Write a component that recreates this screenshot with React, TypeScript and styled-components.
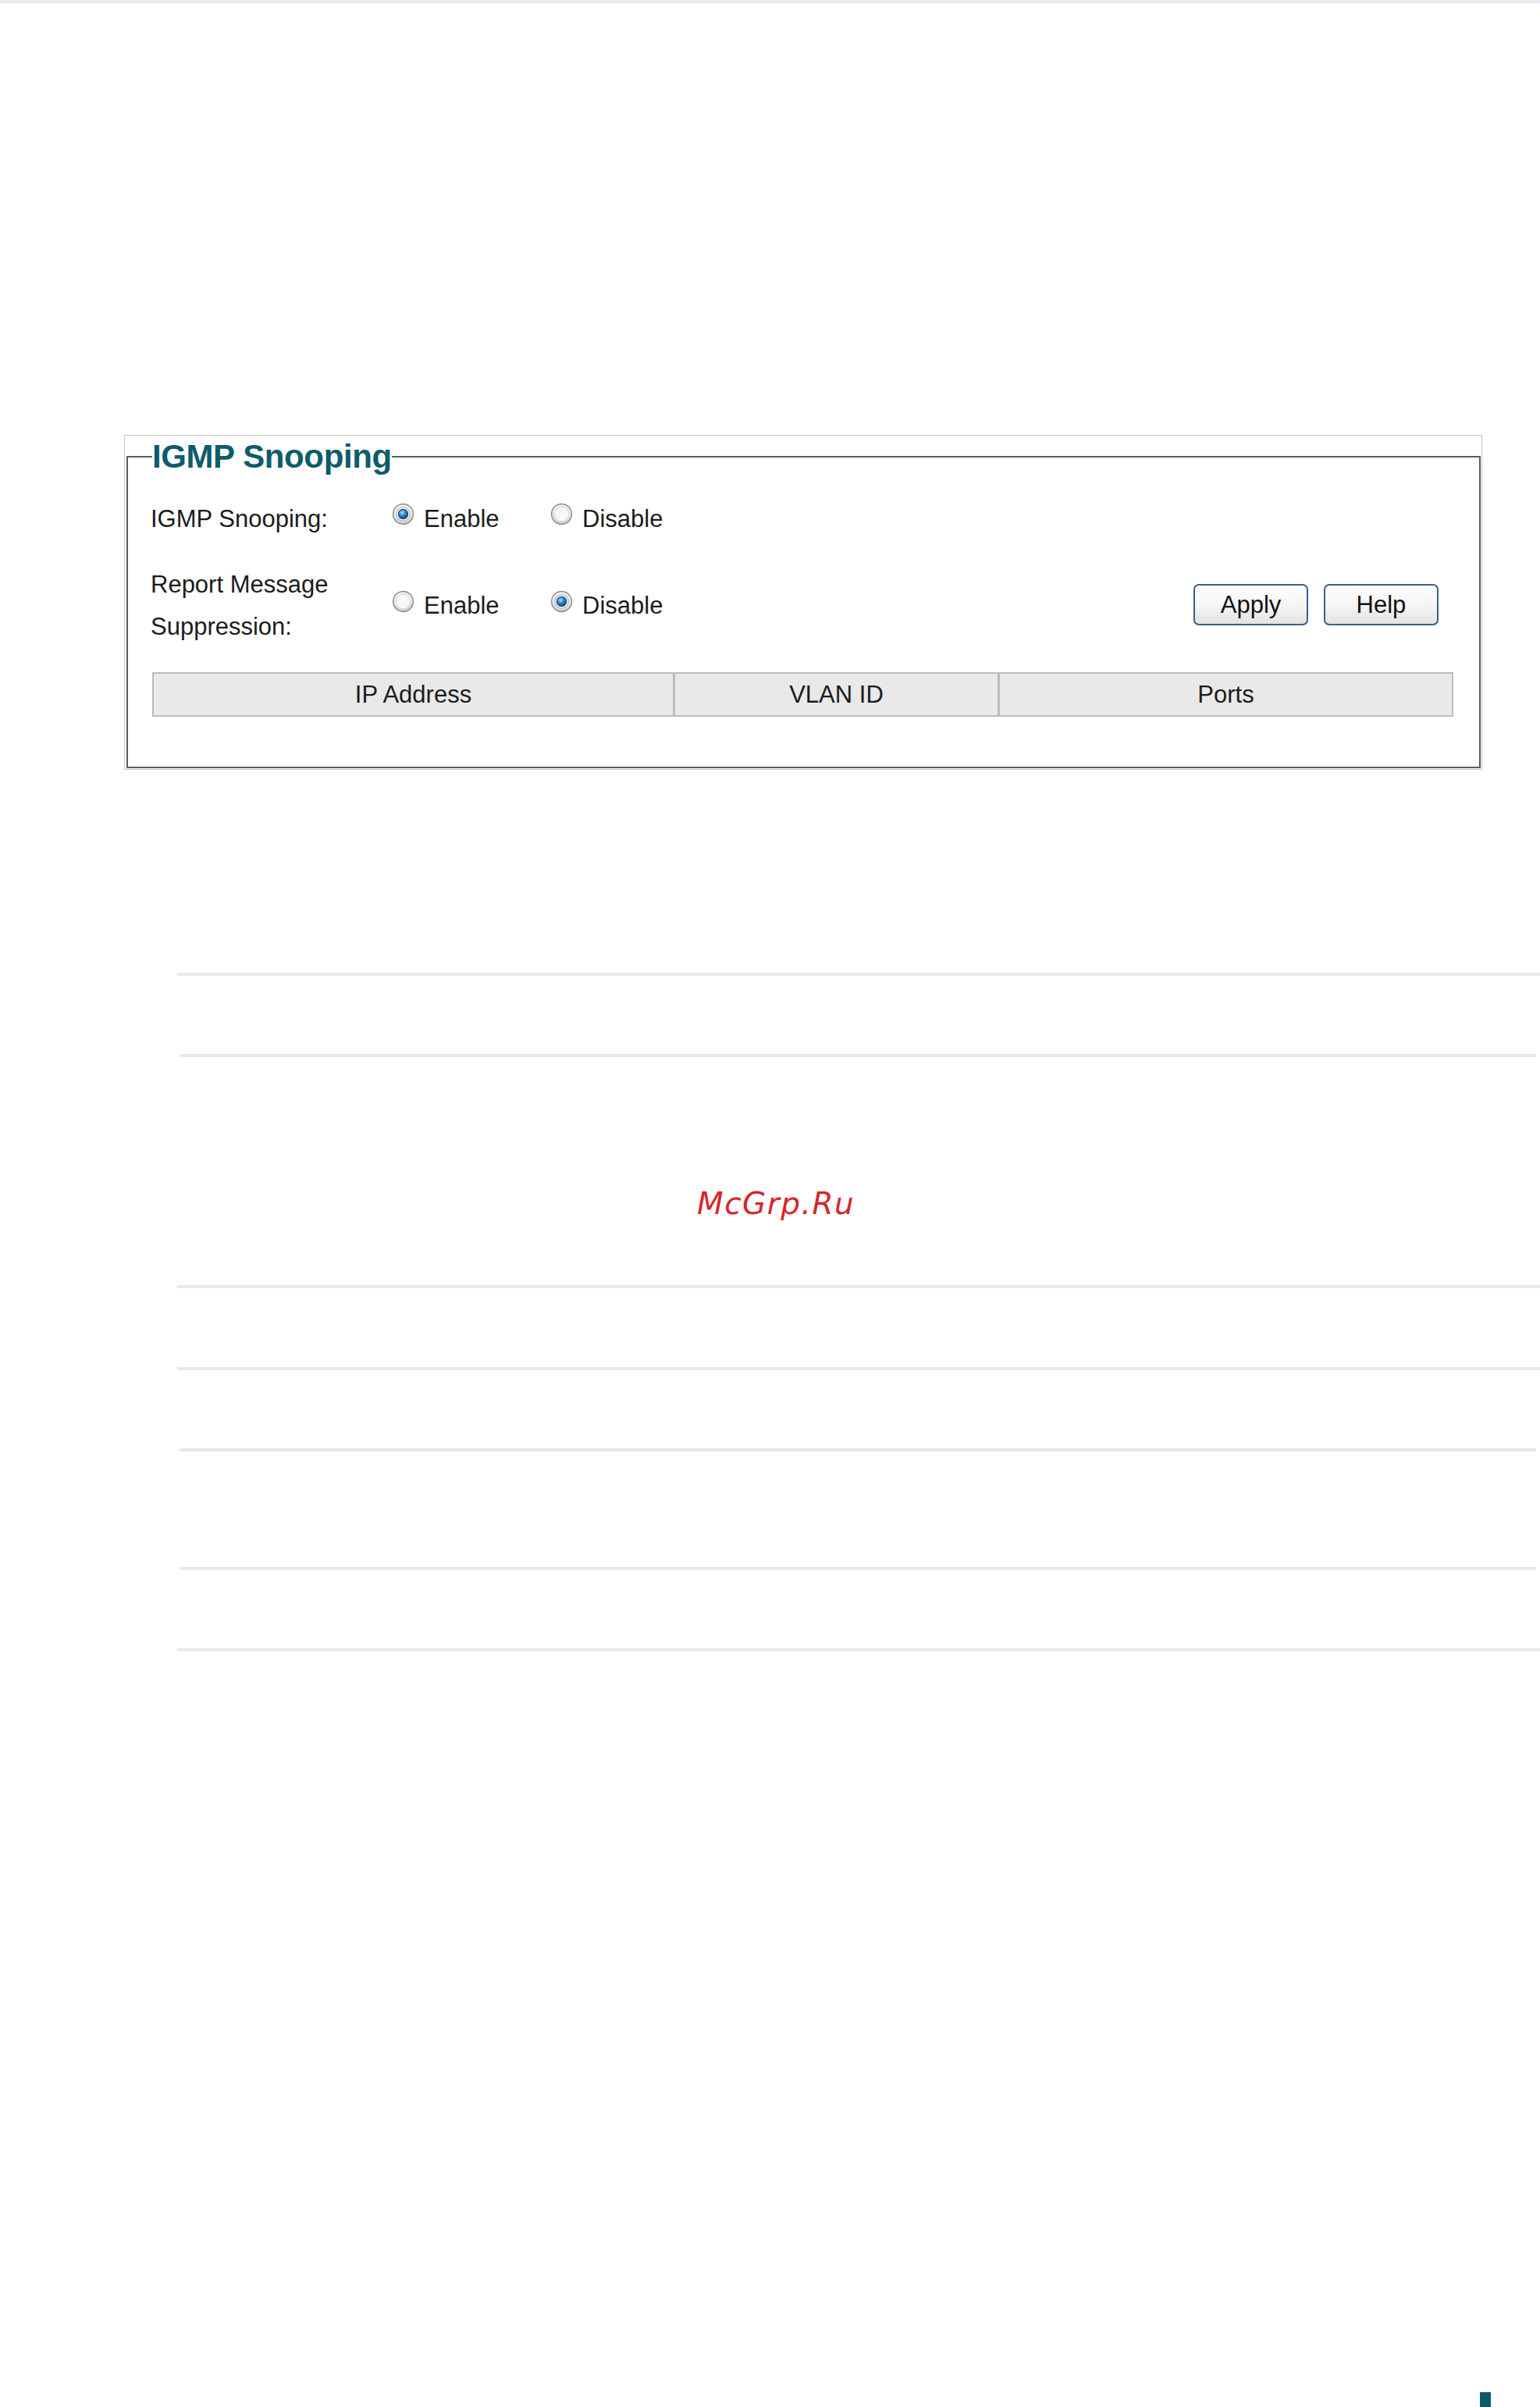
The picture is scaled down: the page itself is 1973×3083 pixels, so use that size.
import React from "react";
import styled, { createGlobalStyle } from "styled-components";

const GlobalStyle = createGlobalStyle`
  html, body {
    margin: 0;
    padding: 0;
    background: #ffffff;
  }
  body {
    font-family: "Liberation Sans", Arial, sans-serif;
    color: #1c1c1c;
  }
`;

const Page = styled.div`
  height: 3083px;
  overflow: hidden;
  display: flex;
  flex-direction: column;
`;

const TopRule = styled.div`
  height: 4px;
  background: #e4edf4;
  flex-shrink: 0;
`;

const Panel = styled.div`
  box-sizing: border-box;
  width: 1740px;
  margin: 553px 0 0 159px;
  padding: 2px 1px 1px 2px;
  border: 1px solid #c6c6c6;
  flex-shrink: 0;
`;

const Frame = styled.fieldset`
  margin: 0;
  min-width: 0;
  padding: 0 33px 64px 29px;
  border: 2px solid #535e65;
`;

const Legend = styled.legend`
  margin-left: 2px;
  padding: 0;
  font-size: 42px;
  line-height: 50px;
  font-weight: bold;
  letter-spacing: -0.4px;
  color: #0e5c6b;
`;

const Body = styled.div`
  padding-top: 34px;
`;

const Row = styled.div<{ $gap?: number }>`
  display: flex;
  align-items: center;
  margin-top: ${(p) => p.$gap ?? 0}px;
  min-height: 40px;
`;

const Label = styled.div<{ $single?: boolean }>`
  width: 309px;
  flex-shrink: 0;
  font-size: 31px;
  line-height: ${(p) => (p.$single ? 40 : 54)}px;
`;

const Option = styled.label`
  display: flex;
  align-items: center;
  width: 203px;
  font-size: 31px;
  line-height: 40px;
  cursor: pointer;
`;

const RadioMark = styled.svg`
  width: 29px;
  height: 29px;
  margin: 0 12px 12px 0;
  flex-shrink: 0;
`;

const Buttons = styled.div`
  display: flex;
  gap: 20px;
  margin: 0 19px 3px auto;
`;

const Button = styled.button`
  box-sizing: border-box;
  width: 147px;
  height: 53px;
  padding: 0;
  border: 2px solid #3b5e88;
  border-radius: 7px;
  background: linear-gradient(#ffffff 0%, #f4f4f4 55%, #e3e3e3 100%);
  font-family: "Liberation Sans", Arial, sans-serif;
  font-size: 31px;
  color: #111111;
  cursor: pointer;
`;

const HeaderGrid = styled.div`
  display: grid;
  grid-template-columns: 668px 416px 1fr;
  margin: 31px 0 0 2px;
  box-sizing: border-box;
  height: 57px;
  border: 2px solid #bcbcbc;
  background: #e9e9e9;
`;

const HeaderCell = styled.div<{ $last?: boolean }>`
  display: flex;
  align-items: center;
  justify-content: center;
  font-size: 31px;
  line-height: 40px;
  border-right: ${(p) => (p.$last ? "none" : "3px solid #bcbcbc")};
`;

const Rules = styled.div`
  margin-top: 260px;
  padding-left: 227px;
  flex-shrink: 0;
`;

const Rule = styled.div<{ $top: number; $narrow?: boolean }>`
  height: 4px;
  background: #e2eaf0;
  margin-top: ${(p) => p.$top}px;
  margin-left: ${(p) => (p.$narrow ? 3 : 0)}px;
  margin-right: ${(p) => (p.$narrow ? 5 : 0)}px;
`;

const Watermark = styled.div`
  margin: 165px 0 0 666px;
  height: 46px;
  font-family: "DejaVu Sans", sans-serif;
  font-style: oblique;
  font-size: 39px;
  line-height: 46px;
  letter-spacing: 1.5px;
  color: #d7262b;
  white-space: nowrap;
`;

const Footer = styled.div`
  margin-top: auto;
  display: flex;
  justify-content: flex-end;
  padding-right: 63px;
`;

const PageMark = styled.div`
  width: 14px;
  height: 19px;
  background: #0b5a68;
`;

const Radio = ({ checked }: { checked: boolean }) => (
  <RadioMark viewBox="0 0 28 28">
    <defs>
      <radialGradient id="ringFill" cx="50%" cy="40%" r="60%">
        <stop offset="0%" stopColor="#ffffff" />
        <stop offset="70%" stopColor="#ebebeb" />
        <stop offset="100%" stopColor="#bcbcbc" />
      </radialGradient>
      <radialGradient id="dotFill" cx="40%" cy="35%" r="70%">
        <stop offset="0%" stopColor="#aee2ff" />
        <stop offset="45%" stopColor="#2c8ad0" />
        <stop offset="100%" stopColor="#0a3f72" />
      </radialGradient>
    </defs>
    <circle cx="14" cy="14" r="12.5" fill="url(#ringFill)" stroke="#8f8f8f" strokeWidth="1.4" />
    {checked ? (
      <>
        <circle cx="14" cy="14" r="8.5" fill="#ffffff" stroke="#a8a8a8" strokeWidth="1" />
        <circle cx="14" cy="14" r="6" fill="url(#dotFill)" stroke="#1d3f66" strokeWidth="1" />
      </>
    ) : (
      <circle cx="14" cy="14" r="9" fill="#f7f7f7" stroke="#d8d8d8" strokeWidth="1" />
    )}
  </RadioMark>
);

const RadioGroup = ({ value }: { value: "enable" | "disable" }) => (
  <>
    <Option>
      <Radio checked={value === "enable"} />
      Enable
    </Option>
    <Option>
      <Radio checked={value === "disable"} />
      Disable
    </Option>
  </>
);

const rules = [
  { top: 0, narrow: false },
  { top: 100, narrow: true },
  { top: 81, narrow: false, afterMark: true },
  { top: 101, narrow: false },
  { top: 100, narrow: true },
  { top: 148, narrow: true },
  { top: 100, narrow: false },
];

export default function App() {
  return (
    <>
      <GlobalStyle />
      <Page>
        <TopRule />
        <Panel>
          <Frame>
            <Legend>IGMP Snooping</Legend>
            <Body>
              <Row>
                <Label $single>IGMP Snooping:</Label>
                <RadioGroup value="enable" />
              </Row>
              <Row $gap={37}>
                <Label>
                  Report Message
                  <br />
                  Suppression:
                </Label>
                <RadioGroup value="disable" />
                <Buttons>
                  <Button type="button">Apply</Button>
                  <Button type="button">Help</Button>
                </Buttons>
              </Row>
              <HeaderGrid>
                <HeaderCell>IP Address</HeaderCell>
                <HeaderCell>VLAN ID</HeaderCell>
                <HeaderCell $last>Ports</HeaderCell>
              </HeaderGrid>
            </Body>
          </Frame>
        </Panel>
        <Rules>
          {rules.map((r, i) => (
            <React.Fragment key={i}>
              {r.afterMark && <Watermark>McGrp.Ru</Watermark>}
              <Rule $top={r.top} $narrow={r.narrow} />
            </React.Fragment>
          ))}
        </Rules>
        <Footer>
          <PageMark />
        </Footer>
      </Page>
    </>
  );
}
